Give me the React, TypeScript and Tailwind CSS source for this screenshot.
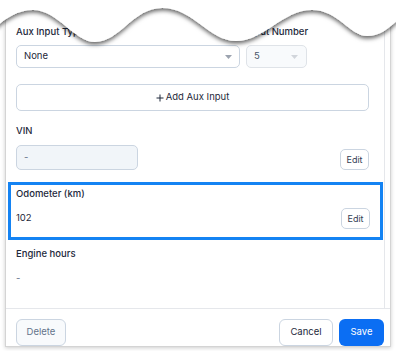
import React from "react";

const Caret = ({ light }: { light?: boolean }) => (
  <svg width="7" height="4" viewBox="0 0 7 4" className="shrink-0">
    <path d="M0 0h7L3.5 4z" fill={light ? "#d1d5db" : "#9ca3af"} />
  </svg>
);

const TornEdge = () => (
  <svg
    width="396"
    height="60"
    viewBox="0 0 396 60"
    className="absolute left-0 top-0 pointer-events-none"
  >
    <defs>
      <filter id="torn" x="-5%" y="-20%" width="110%" height="170%">
        <feDropShadow dx="0" dy="2.5" stdDeviation="2.2" floodColor="#000" floodOpacity="0.6" />
      </filter>
    </defs>
    <path
      d="M-4,-4 L-4,27 C6,18 18,10 33,10 C58,10 74,42 95,42 C120,42 133,8 162,8 C194,8 208,41 236,41 C264,41 283,10 312,10 C338,10 350,36 367,36 C380,36 388,29 400,18 L400,-4 Z"
      fill="#fff"
      filter="url(#torn)"
    />
  </svg>
);

const EditButton = () => (
  <button className="h-[21px] w-[29px] rounded-[5px] border border-[#cbd5e1] bg-white text-[9px] text-[#334155] leading-none">
    Edit
  </button>
);

export default function App() {
  return (
    <div
      className="relative w-[396px] h-[351px] overflow-hidden bg-white"
      style={{ fontFamily: "Inter, 'Noto Sans', sans-serif" }}
    >
      <div className="ml-[5px] w-[386px] h-[347px] flex flex-col bg-white border border-[#d4d4d4] shadow-[0_1px_4px_rgba(0,0,0,0.2)]">
        <div className="flex h-[307px]">
          <div className="w-[379px] border-r border-[#e5e7eb] pl-[10px] pr-[15px] pt-[24px] flex flex-col">
            <div className="flex gap-[6px]">
              <div className="flex flex-col w-[224px]">
                <span className="text-[9.5px] leading-[14px] font-medium text-[#1e293b]">Aux Input Type</span>
                <div className="mt-[6px] h-[23px] rounded-[5px] border border-[#cbd5e1] bg-white flex items-center justify-between pl-[7px] pr-[7px]">
                  <span className="text-[9.5px] text-[#1e293b]">None</span>
                  <Caret />
                </div>
              </div>
              <div className="flex flex-col w-[61px]">
                <span className="text-[9.5px] leading-[14px] font-medium text-[#1e293b] whitespace-nowrap">Input Number</span>
                <div className="mt-[6px] h-[23px] rounded-[5px] border border-[#dfe3e8] bg-[#f8fafc] flex items-center justify-between pl-[7px] pr-[8px]">
                  <span className="text-[9.5px] text-[#475569]">5</span>
                  <Caret light />
                </div>
              </div>
            </div>

            <button className="mt-[16px] h-[27px] w-[353px] rounded-[5px] border border-[#cbd5e1] bg-white flex items-center justify-center gap-[2px] text-[9.5px] text-[#1e293b]">
              <svg width="8" height="8" viewBox="0 0 8 8">
                <path d="M4 0.5v7M0.5 4h7" stroke="#1e293b" strokeWidth="1" />
              </svg>
              Add Aux Input
            </button>

            <span className="mt-[13px] text-[9.5px] leading-[14px] font-medium text-[#1e293b]">VIN</span>
            <div className="mt-[7px] flex items-end justify-between">
              <div className="h-[25px] w-[122px] rounded-[5px] border border-[#cbd5e1] bg-[#f1f5f9] flex items-center pl-[7px] text-[9.5px] text-[#64748b]">
                -
              </div>
              <EditButton />
            </div>

            <div className="mt-[12px] -ml-[8px] w-[375px] border-[3px] border-[#1483f3] pl-[5px] pr-[10px] pt-[2px] pb-[8px] flex flex-col">
              <span className="text-[9.5px] leading-[14px] font-medium text-[#1e293b]">Odometer (km)</span>
              <div className="mt-[7px] flex items-center justify-between">
                <span className="text-[9.5px] text-[#1e293b]">102</span>
                <EditButton />
              </div>
            </div>

            <span className="mt-[7px] text-[9.5px] leading-[14px] font-medium text-[#1e293b]">Engine hours</span>
            <span className="mt-[10px] text-[9.5px] leading-[14px] text-[#64748b]">-</span>
          </div>
          <div className="flex-1" />
        </div>

        <div className="border-t border-[#e5e7eb] flex items-start justify-between pl-[10px] pr-[6px] pt-[10px]">
          <button className="h-[27px] w-[50px] rounded-[6px] border border-[#cbd5e1] bg-[#f8fafc] text-[9.5px] text-[#64748b]">
            Delete
          </button>
          <div className="flex gap-[6px]">
            <button className="h-[27px] w-[54px] rounded-[6px] border border-[#cbd5e1] bg-white text-[9.5px] text-[#1e293b]">
              Cancel
            </button>
            <button className="h-[27px] w-[45px] rounded-[6px] bg-[#0b6ef3] text-[9.5px] text-white">
              Save
            </button>
          </div>
        </div>
      </div>
      <TornEdge />
    </div>
  );
}
